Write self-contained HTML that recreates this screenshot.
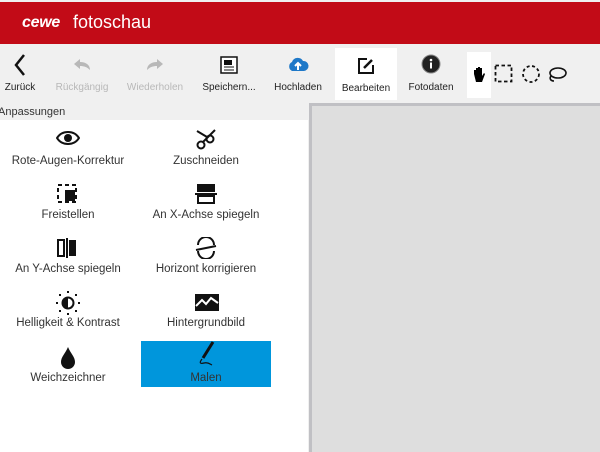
<!DOCTYPE html>
<html><head><meta charset="utf-8"><style>
*{margin:0;padding:0;box-sizing:border-box}
body{width:600px;height:452px;overflow:hidden;background:#f0f0f0;font-family:"Liberation Sans",sans-serif;position:relative;color:#222}
.hdr{position:absolute;left:0;top:2px;width:600px;height:42px;background:#c20b17}
.logo{position:absolute;left:22px;top:12px;color:#fff;font:italic bold 16px "Liberation Sans",sans-serif;letter-spacing:-0.3px}
.title{position:absolute;left:73px;top:10px;color:#fff;font-size:18px}
.tb{position:absolute;top:44px;height:58px;text-align:center;font-size:10px}
.tb svg{display:block;margin:0 auto}
.tb span{position:absolute;left:0;right:0;top:38px;white-space:nowrap}
.dis{color:#b8b8b8}
.panel{position:absolute;left:0;top:120px;width:308px;height:332px;background:#fff}
.anp{position:absolute;left:-2px;top:106px;font-size:11px;color:#333}
.canvas{position:absolute;left:309px;top:103px;width:291px;height:349px;background:#dedede;border-left:3px solid #c0c0c4;border-top:3px solid #c0c0c4}
.it{position:absolute;width:130px;height:46px;text-align:center;font-size:11.5px;color:#333}
.it svg{position:absolute;left:53px;top:5px}
.it span{position:absolute;left:0;right:0;top:31px;white-space:nowrap}
</style></head><body>
<div class="hdr"><div class="logo">cewe</div><div class="title">fotoschau</div></div>

<div class="tb" style="left:0;width:40px"><svg width="20" height="24" style="margin-top:9px"><path d="M14 2 L6 12 L14 22" stroke="#111" stroke-width="2.5" fill="none"/></svg><span>Zurück</span></div>
<div class="tb dis" style="left:50px;width:64px"><svg width="20" height="14" style="margin-top:14px"><path d="M2 6 L8 1 V4 C14 4 18 7 18 12 C15 9 12 8 8 8 V11 Z" fill="#b8b8b8"/></svg><span>Rückgängig</span></div>
<div class="tb dis" style="left:122px;width:66px"><svg width="20" height="14" style="margin-top:14px"><path d="M18 6 L12 1 V4 C6 4 2 7 2 12 C5 9 8 8 12 8 V11 Z" fill="#b8b8b8"/></svg><span>Wiederholen</span></div>
<div class="tb" style="left:198px;width:62px"><svg width="18" height="18" style="margin-top:12px"><rect x="1" y="1" width="16" height="16" fill="#fff" stroke="#111" stroke-width="1.5"/><rect x="4" y="4" width="8" height="5" fill="#111"/><path d="M4 11h10M4 14h10" stroke="#111"/></svg><span>Speichern...</span></div>
<div class="tb" style="left:270px;width:56px"><svg width="22" height="16" style="margin-top:13px"><path d="M5 14 A5 5 0 0 1 5 5 A6 6 0 0 1 16 4 A5 5 0 0 1 17 14 Z" fill="#1e78c8"/><path d="M11 13 V7 M8 9 L11 6 L14 9" stroke="#fff" stroke-width="2" fill="none"/></svg><span>Hochladen</span></div>
<div class="tb" style="left:335px;width:62px;top:48px;height:52px;background:#fff"><svg width="18" height="18" style="margin-top:9px"><path d="M10 2 H2 V16 H16 V8" stroke="#111" stroke-width="2" fill="none"/><path d="M7 11 L15 3" stroke="#111" stroke-width="2.5"/></svg><span style="top:35px">Bearbeiten</span></div>
<div class="tb" style="left:402px;width:58px"><svg width="20" height="20" style="margin-top:10px"><circle cx="10" cy="10" r="9" fill="#222" stroke="#888"/><circle cx="10" cy="6" r="1.3" fill="#fff"/><rect x="9" y="8.5" width="2" height="6" fill="#fff"/></svg><span>Fotodaten</span></div>
<div style="position:absolute;left:467px;top:52px;width:24px;height:46px;background:#fff"></div>
<svg style="position:absolute;left:472px;top:65px" width="14" height="20"><path d="M2 9 V5 h2 V10 V3 h2 V9 V2 h2 V9 V3 h2 V11 L12 8 L13 9 L10 17 H4 Z" fill="#000"/></svg>
<svg style="position:absolute;left:494px;top:64px" width="20" height="20"><rect x="1.5" y="1.5" width="16" height="16" stroke="#111" stroke-width="1.8" stroke-dasharray="3.5 2.5" fill="none"/></svg>
<svg style="position:absolute;left:521px;top:64px" width="20" height="20"><circle cx="10" cy="10" r="8" stroke="#111" stroke-width="1.8" stroke-dasharray="3 2.5" fill="none"/></svg>
<svg style="position:absolute;left:546px;top:66px" width="22" height="18"><ellipse cx="12" cy="7" rx="8" ry="5" stroke="#111" stroke-width="1.6" fill="none"/><path d="M5 10 C3 13 5 15 8 15" stroke="#111" stroke-width="1.6" fill="none"/></svg>

<div class="anp">Anpassungen</div>
<div class="panel"></div>
<div class="canvas"></div>

<div class="it" style="left:3px;top:124px"><svg width="24" height="18"><path d="M1 9 C6 1 18 1 23 9 C18 17 6 17 1 9Z" fill="none" stroke="#111" stroke-width="2"/><circle cx="12" cy="9" r="4" fill="#111"/></svg><span>Rote-Augen-Korrektur</span></div>
<div class="it" style="left:141px;top:124px"><svg width="24" height="22"><circle cx="7" cy="16" r="3.5" stroke="#111" stroke-width="2" fill="none"/><circle cx="16" cy="10" r="3.5" stroke="#111" stroke-width="2" fill="none"/><path d="M9 13 L21 1 M13 8 L3 2" stroke="#111" stroke-width="2"/></svg><span>Zuschneiden</span></div>
<div class="it" style="left:3px;top:178px"><svg width="24" height="22"><rect x="2" y="2" width="18" height="17" stroke="#111" stroke-width="2" stroke-dasharray="4 3" fill="none"/><rect x="9" y="7" width="10" height="11" fill="#111"/></svg><span>Freistellen</span></div>
<div class="it" style="left:141px;top:178px"><svg width="24" height="22"><rect x="3" y="1" width="18" height="8" fill="#111"/><rect x="1" y="10" width="22" height="2" fill="#111"/><rect x="4" y="13" width="16" height="7" stroke="#111" stroke-width="2" fill="none"/></svg><span>An X-Achse spiegeln</span></div>
<div class="it" style="left:3px;top:232px"><svg width="24" height="22"><rect x="2" y="3" width="6" height="16" stroke="#111" stroke-width="2" fill="none"/><rect x="10" y="1" width="2" height="20" fill="#111"/><rect x="13" y="3" width="7" height="16" fill="#111"/></svg><span>An Y-Achse spiegeln</span></div>
<div class="it" style="left:141px;top:232px"><svg width="24" height="22"><path d="M4 8 A8 8 0 0 1 20 8 M4 14 A8 8 0 0 0 20 14 M2 13 L22 9" stroke="#111" stroke-width="2" fill="none"/></svg><span>Horizont korrigieren</span></div>
<div class="it" style="left:3px;top:286px"><svg width="24" height="24"><circle cx="12" cy="12" r="5.5" stroke="#111" stroke-width="2" fill="#fff"/><path d="M12 6.5 A5.5 5.5 0 0 0 12 17.5Z" fill="#111"/><g fill="#111"><rect x="11" y="0" width="2" height="2"/><rect x="11" y="22" width="2" height="2"/><rect x="0" y="11" width="2" height="2"/><rect x="22" y="11" width="2" height="2"/><rect x="3" y="3" width="2" height="2"/><rect x="19" y="3" width="2" height="2"/><rect x="3" y="19" width="2" height="2"/><rect x="19" y="19" width="2" height="2"/></g></svg><span>Helligkeit &amp; Kontrast</span></div>
<div class="it" style="left:141px;top:286px"><svg width="26" height="22"><rect x="1" y="3" width="24" height="17" fill="#111"/><path d="M2 15 L8 9 L12 13 L17 7 L24 12" stroke="#fff" stroke-width="2" fill="none"/></svg><span>Hintergrundbild</span></div>
<div class="it" style="left:3px;top:341px"><svg width="24" height="24"><path d="M12 1 C9 8 5 11 5 16 A7 7 0 0 0 19 16 C19 11 15 8 12 1Z" fill="#111"/></svg><span>Weichzeichner</span></div>
<div class="it" style="left:141px;top:341px;background:#0096dc"><svg width="24" height="26" style="top:0px"><path d="M19 1 L9 17" stroke="#111" stroke-width="3"/><path d="M8 18 C5 22 6 23 10 22 C14 21 16 23 18 24" stroke="#111" stroke-width="1.2" fill="none"/></svg><span>Malen</span></div>
</body></html>
